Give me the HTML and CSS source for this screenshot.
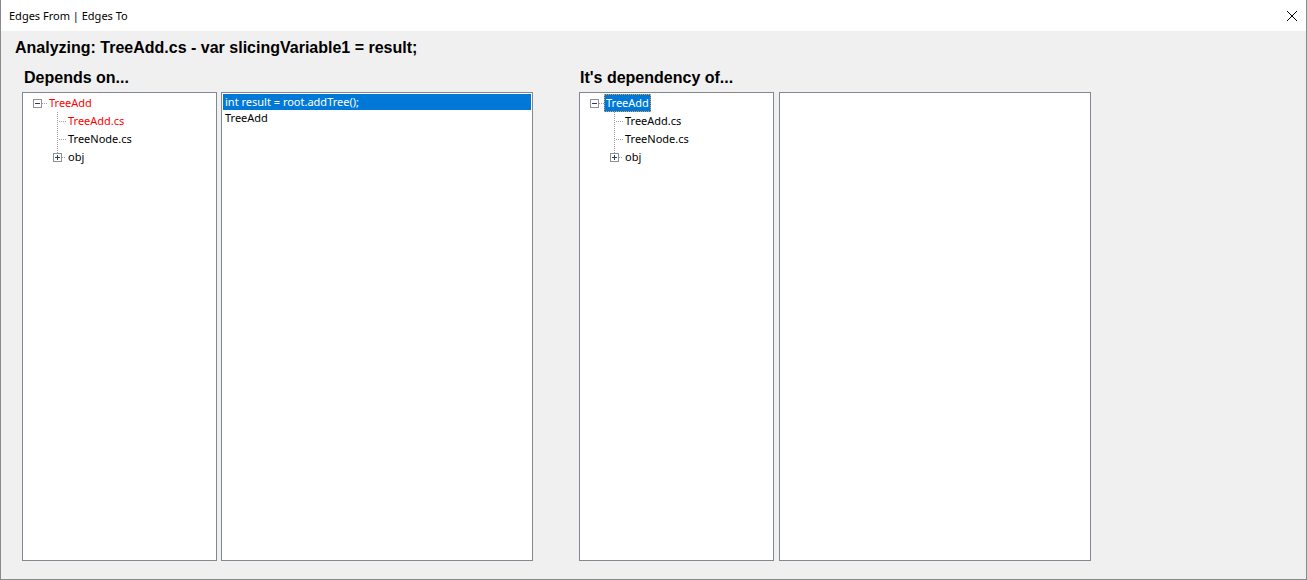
FILE: index.html
```html
<!DOCTYPE html>
<html>
<head>
<meta charset="utf-8">
<title>Edges From | Edges To</title>
<link rel="stylesheet" href="styles.css">
</head>
<body>
<div class="window">
  <div class="titlebar">
    <span class="title">Edges From | Edges To</span>
    <span class="close">
      <svg width="12" height="12" viewBox="0 0 12 12"><path d="M1 1 L11 11 M11 1 L1 11" stroke="#000" stroke-width="1" fill="none"/></svg>
    </span>
  </div>
  <div class="content">
    <h1 class="analyzing">Analyzing: TreeAdd.cs - var slicingVariable1 = result;</h1>
    <div class="panels">
      <div class="group">
        <div class="group-title">Depends on...</div>
        <div class="boxes">
          <div class="tree">
            <div class="row">
              <svg class="gutter root-gutter" width="23" height="18" viewBox="0 0 23 18">
                <rect x="9.5" y="5.5" width="8" height="8" fill="#fff" stroke="#919191"/>
                <path d="M11 9.5 H16" stroke="#2c3e66"/>
                <path d="M18 9.5 H23" stroke="#a0a0a0" stroke-dasharray="1 1"/>
              </svg>
              <span class="label red">TreeAdd</span>
            </div>
            <div class="row">
              <svg class="gutter" width="42" height="18" viewBox="0 0 42 18">
                <path d="M33.5 0 V18" stroke="#a0a0a0" stroke-dasharray="1 1"/>
                <path d="M35 9.5 H42" stroke="#a0a0a0" stroke-dasharray="1 1"/>
              </svg>
              <span class="label red">TreeAdd.cs</span>
            </div>
            <div class="row">
              <svg class="gutter" width="42" height="18" viewBox="0 0 42 18">
                <path d="M33.5 0 V18" stroke="#a0a0a0" stroke-dasharray="1 1"/>
                <path d="M35 9.5 H42" stroke="#a0a0a0" stroke-dasharray="1 1"/>
              </svg>
              <span class="label">TreeNode.cs</span>
            </div>
            <div class="row">
              <svg class="gutter" width="42" height="18" viewBox="0 0 42 18">
                <path d="M33.5 0 V5" stroke="#a0a0a0" stroke-dasharray="1 1"/>
                <rect x="29.5" y="5.5" width="8" height="8" fill="#fff" stroke="#919191"/>
                <path d="M31 9.5 H36 M33.5 7 V12" stroke="#2c3e66"/>
                <path d="M38 9.5 H42" stroke="#a0a0a0" stroke-dasharray="1 1"/>
              </svg>
              <span class="label">obj</span>
            </div>
          </div>
          <div class="list">
            <div class="item selected">int result = root.addTree();</div>
            <div class="item">TreeAdd</div>
          </div>
        </div>
      </div>
      <div class="group">
        <div class="group-title second">It's dependency of...</div>
        <div class="boxes wide-gap">
          <div class="tree">
            <div class="row">
              <svg class="gutter root-gutter" width="23" height="18" viewBox="0 0 23 18">
                <rect x="9.5" y="5.5" width="8" height="8" fill="#fff" stroke="#919191"/>
                <path d="M11 9.5 H16" stroke="#2c3e66"/>
                <path d="M18 9.5 H23" stroke="#a0a0a0" stroke-dasharray="1 1"/>
              </svg>
              <span class="label focused">TreeAdd</span>
            </div>
            <div class="row">
              <svg class="gutter" width="42" height="18" viewBox="0 0 42 18">
                <path d="M33.5 0 V18" stroke="#a0a0a0" stroke-dasharray="1 1"/>
                <path d="M35 9.5 H42" stroke="#a0a0a0" stroke-dasharray="1 1"/>
              </svg>
              <span class="label">TreeAdd.cs</span>
            </div>
            <div class="row">
              <svg class="gutter" width="42" height="18" viewBox="0 0 42 18">
                <path d="M33.5 0 V18" stroke="#a0a0a0" stroke-dasharray="1 1"/>
                <path d="M35 9.5 H42" stroke="#a0a0a0" stroke-dasharray="1 1"/>
              </svg>
              <span class="label">TreeNode.cs</span>
            </div>
            <div class="row">
              <svg class="gutter" width="42" height="18" viewBox="0 0 42 18">
                <path d="M33.5 0 V5" stroke="#a0a0a0" stroke-dasharray="1 1"/>
                <rect x="29.5" y="5.5" width="8" height="8" fill="#fff" stroke="#919191"/>
                <path d="M31 9.5 H36 M33.5 7 V12" stroke="#2c3e66"/>
                <path d="M38 9.5 H42" stroke="#a0a0a0" stroke-dasharray="1 1"/>
              </svg>
              <span class="label">obj</span>
            </div>
          </div>
          <div class="list"></div>
        </div>
      </div>
    </div>
  </div>
</div>
</body>
</html>
```

FILE: styles.css
```css
html, body {
  margin: 0;
  padding: 0;
  background: #f0f0f0;
}

.window {
  width: 1307px;
  height: 580px;
  box-sizing: border-box;
  border: 1px solid #8a8a8a;
  border-top: none;
  display: flex;
  flex-direction: column;
  background: #f0f0f0;
  overflow: hidden;
}

.titlebar {
  height: 31px;
  flex: 0 0 31px;
  background: #ffffff;
  display: flex;
  align-items: center;
  justify-content: space-between;
  padding-left: 8px;
  padding-right: 8px;
}

.title {
  font-family: "Noto Sans", "Open Sans", sans-serif;
  font-size: 11px;
  color: #000;
}

.close {
  display: flex;
  align-items: center;
  justify-content: center;
  width: 12px;
  height: 12px;
}

.content {
  flex: 1;
  padding: 8px 0 0 14px;
}

.analyzing {
  margin: 0;
  font-family: "Liberation Sans", Arial, sans-serif;
  font-weight: bold;
  font-size: 16px;
  line-height: 18px;
  color: #000;
}

.panels {
  display: flex;
  gap: 46px;
  margin-top: 12px;
  margin-left: 7px;
}

.group {
  display: flex;
  flex-direction: column;
}

.group-title {
  margin-left: 2px;
  font-family: "Liberation Sans", Arial, sans-serif;
  font-weight: bold;
  font-size: 16px;
  line-height: 18px;
  color: #000;
}

.group-title.second {
  margin-left: 1px;
}

.boxes {
  display: flex;
  gap: 4px;
  margin-top: 5px;
}

.boxes.wide-gap {
  gap: 5px;
}

.tree, .list {
  height: 469px;
  box-sizing: border-box;
  border: 1px solid #828790;
  background: #ffffff;
  padding: 1px;
  font-family: "Noto Sans", "Open Sans", sans-serif;
  font-size: 11px;
  color: #000;
}

.tree {
  width: 195px;
}

.list {
  width: 312px;
}

.row {
  display: flex;
  align-items: flex-start;
  height: 18px;
}

.gutter {
  flex: 0 0 auto;
  display: block;
}

.label {
  height: 18px;
  line-height: 18px;
  padding: 0 2px;
  box-sizing: border-box;
  white-space: nowrap;
}

.red {
  color: #ff0000;
}

.focused {
  background: #0078d7;
  color: #ffffff;
  outline: 1px dotted #f0a040;
  outline-offset: -1px;
}

.item {
  height: 16px;
  line-height: 16px;
  padding-left: 2px;
  white-space: nowrap;
}

.item.selected {
  background: #0078d7;
  color: #ffffff;
}
```
